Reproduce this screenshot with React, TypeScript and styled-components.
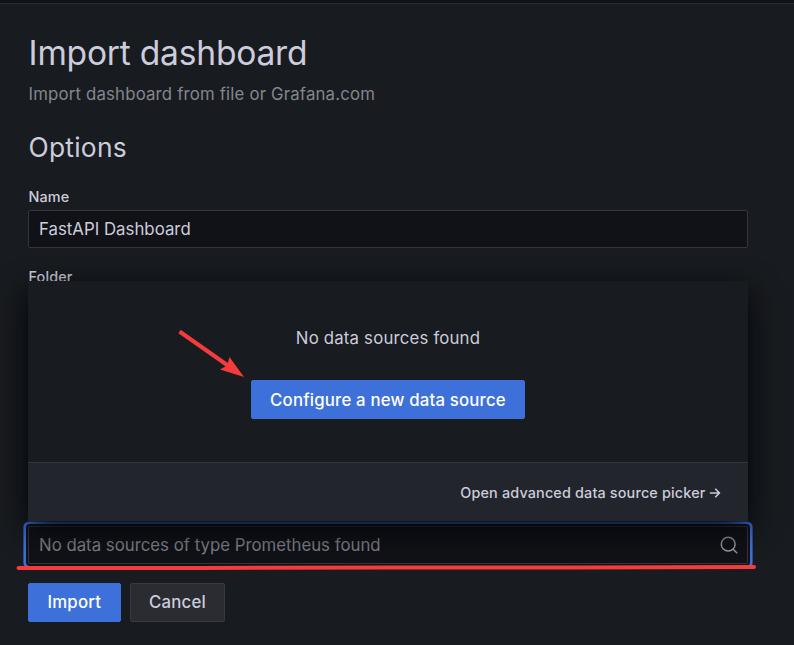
import React from "react";
import styled, { createGlobalStyle, css } from "styled-components";

const GlobalStyle = createGlobalStyle`
  *, *::before, *::after { box-sizing: border-box; }
  html, body { margin: 0; height: 100%; overflow: hidden; background: #181b1f; }
  #root { height: 100%; }
`;

const Page = styled.main`
  height: 645px;
  padding: 29px 46px 0 28px;
  border-top: 3px solid #111217;
  background: #181b1f;
  color: #ccccdc;
  font-family: Inter, "Liberation Sans", sans-serif;
  font-size: 16.8px;
  line-height: 26px;
  letter-spacing: 0.18px;
  position: relative;

  &::before {
    content: "";
    position: absolute;
    inset: 0 0 auto;
    height: 1px;
    background: #2c2d33;
  }
`;

const Title = styled.h1`
  margin: 0;
  padding-left: 0.6px;
  font-size: 33.6px;
  line-height: 42px;
  font-weight: 400;
  letter-spacing: -0.22px;
`;

const Subtitle = styled.p`
  margin: 7px 0 0;
  padding-left: 0.5px;
  color: #85868f;
  letter-spacing: 0.17px;
`;

const SectionTitle = styled.h2`
  margin: 24px 0 0;
  padding-left: 0.5px;
  font-size: 26.4px;
  line-height: 32px;
  font-weight: 400;
  letter-spacing: 0.25px;
`;

const Label = styled.label<{ $top: number }>`
  display: block;
  margin-top: ${(p) => p.$top}px;
  padding-left: 0.5px;
  font-size: 14.4px;
  line-height: 18px;
  font-weight: 500;
  letter-spacing: 0.14px;
`;

const Field = styled.div<{ $focused?: boolean }>`
  display: flex;
  align-items: center;
  justify-content: space-between;
  height: 38px;
  padding: 0 9px 0 10px;
  border: 1px solid #35363b;
  border-radius: 2px;
  background: #111217;
  letter-spacing: 0;
  ${(p) =>
    p.$focused &&
    css`
      box-shadow: 0 0 0 2px #111217, 0 0 0 4.6px #3d71d9;
    `}
`;

const NameField = styled(Field)`
  margin-top: 4px;
  letter-spacing: 0.02px;
`;

const Placeholder = styled.span`
  color: #82838c;
`;

const Picker = styled.section`
  position: relative;
  z-index: 1;
  height: 240px;
  margin: -5px 0 5px;
  display: flex;
  flex-direction: column;
  background: #181b1f;
  box-shadow: 0 9.6px 28.8px rgb(1, 4, 9);
`;

const EmptyState = styled.div`
  flex: 1;
  display: flex;
  flex-direction: column;
  align-items: center;
  padding-top: 44px;
  gap: 29px;
`;

const PickerFooter = styled.div`
  height: 59px;
  display: flex;
  align-items: center;
  justify-content: flex-end;
  gap: 3px;
  padding: 2px 27.5px 0 0;
  border-top: 1px solid #35363b;
  background: #22252b;
  font-size: 14.4px;
  font-weight: 500;
  letter-spacing: 0.16px;
`;

const Button = styled.button<{ $secondary?: boolean }>`
  height: 39px;
  padding: 0 18.5px;
  border: 1px solid ${(p) => (p.$secondary ? "#393a3f" : "#3d71d9")};
  border-radius: 2px;
  background: ${(p) => (p.$secondary ? "#2b2c31" : "#3d71d9")};
  color: ${(p) => (p.$secondary ? "#ccccdc" : "#fff")};
  font: inherit;
  font-weight: 500;
  letter-spacing: inherit;
  white-space: nowrap;
`;

const Actions = styled.div`
  display: flex;
  gap: 9px;
  margin-top: 19px;

  ${Button} {
    padding-bottom: 2px;
  }
`;

const Annotation = styled.svg`
  position: absolute;
  z-index: 2;
  top: -3px;
  left: 0;
  pointer-events: none;
`;

export default function App() {
  return (
    <>
      <GlobalStyle />
      <Page>
        <Title>Import dashboard</Title>
        <Subtitle>Import dashboard from file or Grafana.com</Subtitle>
        <SectionTitle>Options</SectionTitle>
        <Label $top={25}>Name</Label>
        <NameField>FastAPI Dashboard</NameField>
        <Label $top={20}>Folder</Label>
        <Picker>
          <EmptyState>
            <span>No data sources found</span>
            <Button>Configure a new data source</Button>
          </EmptyState>
          <PickerFooter>
            <span>Open advanced data source picker</span>
            <svg width="12" height="12" viewBox="0 0 12 12" fill="none" stroke="currentColor" strokeWidth="1.6" strokeLinecap="round" strokeLinejoin="round">
              <path d="M1.5 6H10.5M6.7 2.2L10.5 6L6.7 9.8" />
            </svg>
          </PickerFooter>
        </Picker>
        <Field $focused>
          <Placeholder>No data sources of type Prometheus found</Placeholder>
          <svg width="18" height="18" viewBox="0 0 18 18" fill="none" stroke="#9a9aa6" strokeWidth="1.5" strokeLinecap="round">
            <circle cx="8.2" cy="8.2" r="6.9" />
            <path d="M13.2 13.2L16.7 16.7" />
          </svg>
        </Field>
        <Actions>
          <Button>Import</Button>
          <Button $secondary>Cancel</Button>
        </Actions>
        <Annotation width="794" height="645" viewBox="0 0 794 645">
          <path d="M179.5 331.5L230 367" stroke="#f53b3b" strokeWidth="4" />
          <path d="M244 377L229.5 357L227 365.5L220 369.5Z" fill="#f53b3b" />
          <path d="M18.5 568H200L390 567.5H570L754 567" fill="none" stroke="#f53b3b" strokeWidth="4" strokeLinecap="round" />
        </Annotation>
      </Page>
    </>
  );
}
